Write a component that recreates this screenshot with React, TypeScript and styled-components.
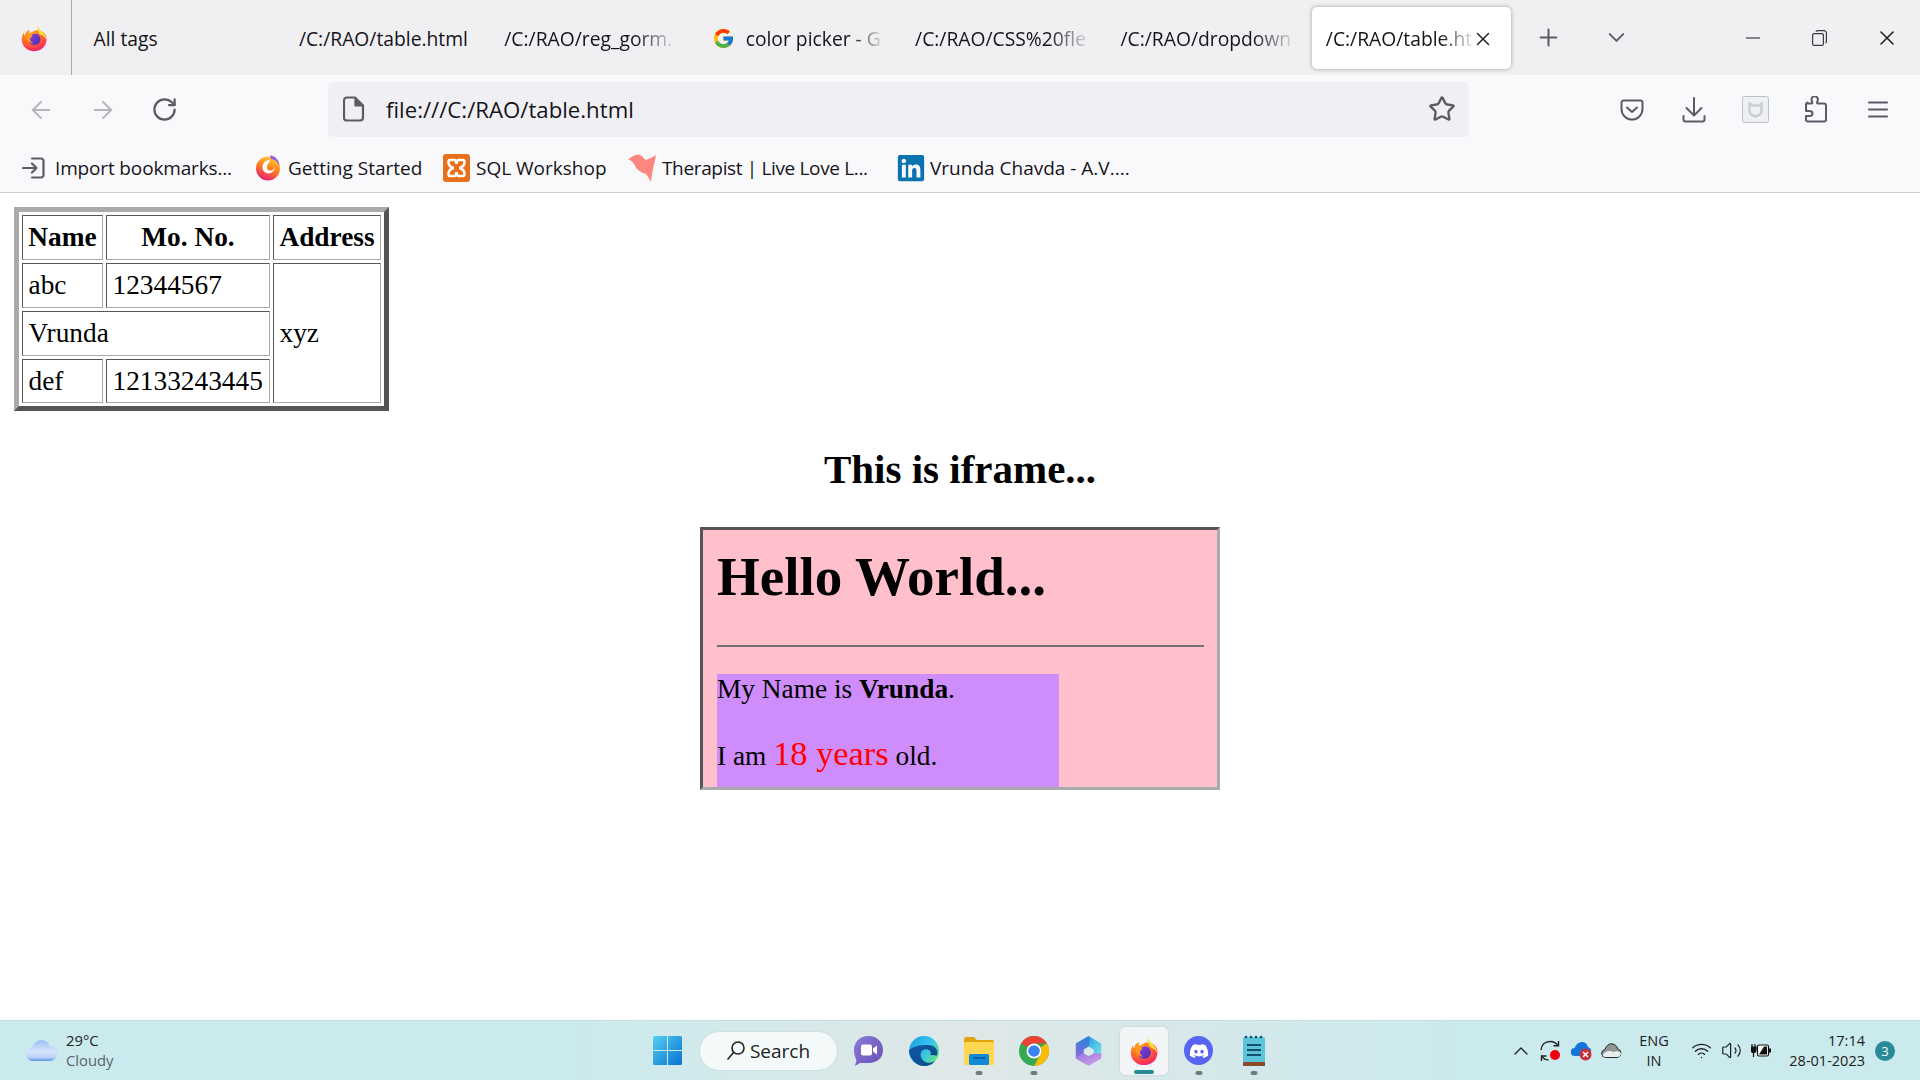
import React from "react";
import styled, { createGlobalStyle } from "styled-components";
import { ArrowLeft, ArrowRight, RotateCw, Star, X, Plus, ChevronDown, ChevronUp, Wifi, Volume2 } from "lucide-react";
import { FcGoogle } from "react-icons/fc";
import { FaDiscord, FaLinkedin } from "react-icons/fa";

const UI = `"Open Sans", "Noto Sans", sans-serif`;
const SERIF = `"Liberation Serif", serif`;
const ICON = "#5b5b66";

const Global = createGlobalStyle`
  html, body { margin: 0; padding: 0; height: 100%; background: #fff; overflow: hidden; }
  #root { height: 100%; }
`;

const Screen = styled.div`
  width: 1920px; height: 1080px; display: flex; flex-direction: column; overflow: hidden; font-family: ${UI}; color: #15141a;
`;
const TabBar = styled.div`
  height: 75px; flex: none; background: #f0f0f2; display: flex; align-items: stretch;
`;
const AppMenu = styled.div`
  width: 72px; margin-right: 7.5px; border-right: 1px solid #a8a8a8; display: flex; align-items: center; justify-content: center; padding-right: 3px; box-sizing: border-box; flex: none;
`;
const Tab = styled.div<{ $active?: boolean }>`
  width: 199px; margin: 7px 6.4px 6px 0; padding: 1px 16px 0 14px; box-sizing: border-box; flex: none;
  display: flex; align-items: center; gap: 7px; font-size: 19.3px; border-radius: 5px; white-space: nowrap;
  background: ${p => (p.$active ? "#fff" : "transparent")};
  box-shadow: ${p => (p.$active ? "0 0 4px rgba(0,0,0,.35)" : "none")};
`;
const TabLabel = styled.span<{ $fade?: boolean }>`
  display: block; flex: none; line-height: 30px;
  ${p => p.$fade ? "mask-image: linear-gradient(to right, #000 78%, rgba(0,0,0,.12) 100%);" : ""}
`;
const GoogleMark = styled(FcGoogle)`
  margin: 0 4px 0 2px; flex: none;
`;
const TabClose = styled(X)`
  margin-left: -7px; flex: none;
`;
const TabTools = styled.div`
  display: flex; align-items: center; gap: 5px; width: 131px; flex: none;
`;
const ToolSlot = styled.div`
  width: 63px; display: flex; justify-content: center; align-items: center; flex: none;
`;
const WindowControls = styled.div`
  display: flex; align-items: center; margin-left: auto;
`;
const WinBtn = styled.div`
  width: 67px; display: flex; justify-content: center; align-items: center;
`;

const NavBar = styled.div`
  height: 68px; flex: none; background: #f9f9fb; display: flex; align-items: center; padding-left: 10.5px;
`;
const NavSlot = styled.div`
  width: 61.5px; flex: none; display: flex; justify-content: center; align-items: center; padding-top: 1px;
`;
const Address = styled.div`
  width: 1141px; height: 55px; margin: 0 132.5px 0 133px; flex: none; box-sizing: border-box; border-radius: 5px; background: #f0f0f4;
  display: flex; align-items: center; padding: 0 13px 0 15px; gap: 21px; font-size: 22.2px;
`;
const Url = styled.span` flex: 1; padding-top: 1px; `;

const Bookmarks = styled.div`
  height: 50px; flex: none; background: #f9f9fb; border-bottom: 1px solid #cfcfd2; box-sizing: border-box; display: flex; align-items: center; padding: 1px 0 0 22px; font-size: 19px;
`;
const Bookmark = styled.div<{ $gap: number; $w: number; $ls?: number }>`
  display: flex; align-items: center; gap: ${p => p.$gap}px; width: ${p => p.$w}px; flex: none; white-space: nowrap;
  letter-spacing: ${p => p.$ls ?? 0}px;
`;

const Page = styled.main`
  flex: 1; background: #fff; color: #000; font-family: ${SERIF}; padding-top: 14px; min-height: 0;
`;
const InfoTable = styled.table`
  margin-left: 14px; border-collapse: separate; border-spacing: 3px; border-width: 5px; border-style: solid;
  border-color: #aaa #555 #555 #aaa; font-size: 27.33px; table-layout: fixed; width: 375px; box-sizing: border-box;
`;
const Col = styled.col<{ $w: number }>` width: ${p => p.$w}px; `;
const Head = styled.th`
  height: 45px; box-sizing: border-box; padding: 0 5px; border: 1px solid; border-color: #555 #aaa #aaa #555; text-align: center; font-weight: bold; white-space: nowrap;
`;
const Cell = styled.td<{ $h?: number }>`
  height: ${p => p.$h ?? 45}px; box-sizing: border-box; padding: 0 5.5px; border: 1px solid; border-color: #555 #aaa #aaa #555; white-space: nowrap;
`;
const FrameTitle = styled.h2`
  margin: 35px 0 34px; font-size: 41px; line-height: 47px; font-weight: bold; text-align: center;
`;
const Frame = styled.div`
  width: 520px; height: 263px; margin: 0 auto; box-sizing: border-box; overflow: hidden; background: #ffbfcb;
  border: 3px solid; border-color: #555 #aaa #aaa #555; padding: 16px 13px 0 14px;
`;
const Hello = styled.h1`
  margin: 0; font-size: 55px; line-height: 61px; font-weight: bold;
`;
const Rule = styled.hr`
  margin: 38px 0 27px; height: 2px; border: 0; background: #707070;
`;
const Purple = styled.div`
  width: 342px; height: 113px; background: #cf8cfb; font-size: 27.33px; line-height: 31px;
`;
const Line = styled.p<{ $top: number }>` margin: ${p => p.$top}px 0 0; `;
const Big = styled.span` color: #ff0000; font-size: 34.4px; `;

const Taskbar = styled.footer`
  height: 60px; flex: none; display: grid; grid-template-columns: 1fr auto 1fr; align-items: center; border-top: 1px solid #c4e0e2; box-sizing: border-box;
  background: linear-gradient(to right, #cbeaee 0%, #cbeaee 30%, #dfe8e7 50%, #d6e8ea 62%, #cbeaee 76%, #cbeaee 100%);
`;
const Weather = styled.div` display: flex; align-items: center; gap: 9px; padding-left: 26px; `;
const WeatherText = styled.div` display: flex; flex-direction: column; font-size: 14.8px; line-height: 20px; padding-bottom: 2px; `;
const Temp = styled.span` color: #222; `;
const Sky = styled.span` color: #5a6466; `;
const Center = styled.div` display: flex; align-items: center; `;
const Slot = styled.div<{ $active?: boolean; $wide?: boolean }>`
  width: ${p => p.$wide ? 56 : 55}px; height: 48px; flex: none; position: relative; display: flex; align-items: center; justify-content: center; box-sizing: border-box; border-radius: 5px;
  ${p => p.$active ? "background: #f1f5f5; box-shadow: 0 0 2px rgba(0,0,0,.15); width: 48px; margin: 0 3.5px;" : ""}
`;
const Dot = styled.span<{ $active?: boolean }>`
  position: absolute; bottom: ${p => p.$active ? "1px" : "0"}; left: 50%; transform: translateX(-50%); height: 4px; border-radius: 2px;
  width: ${p => p.$active ? "20px" : "7px"}; background: ${p => p.$active ? "#2a8a96" : "#707a7c"};
`;
const SearchPill = styled.div`
  width: 137px; height: 38px; margin: 0 4px 0 5px; flex: none; border-radius: 19px; background: #f4f9f9; box-shadow: 0 0 2px rgba(0,0,0,.12); box-sizing: border-box;
  display: flex; align-items: center; justify-content: center; gap: 5px; font-size: 19px; color: #222;
`;
const Tray = styled.div` display: flex; align-items: center; justify-content: flex-end; padding-right: 25px; `;
const TrayIcon = styled.div` width: 30px; display: flex; align-items: center; justify-content: center; flex: none; `;
const Lang = styled.div`
  width: 56px; margin-right: 4px; flex: none; text-align: center; font-size: 14.5px; line-height: 20px; color: #222;
`;
const Clock = styled.div`
  width: 89px; padding-right: 10px; text-align: right; font-size: 14.5px; line-height: 20px; color: #222; white-space: nowrap;
`;
const Badge = styled.div`
  width: 20px; height: 20px; border-radius: 50%; background: #2a8a96; color: #fff; font-size: 13px; display: flex; align-items: center; justify-content: center; flex: none;
`;
const DiscordDisc = styled.div`
  width: 29px; height: 29px; border-radius: 50%; background: #5865f2; display: flex; align-items: center; justify-content: center;
`;

const FirefoxLogo = ({ size, id }: { size: number; id: string }) => (
  <svg width={size} height={size} viewBox="0 0 32 32">
    <defs>
      <radialGradient id={id} cx="0.35" cy="0.2" r="0.95">
        <stop offset="0" stopColor="#ffb01f" />
        <stop offset="0.35" stopColor="#ff7a1f" />
        <stop offset="0.7" stopColor="#ff3b4e" />
        <stop offset="1" stopColor="#e31587" />
      </radialGradient>
      <linearGradient id={`${id}p`} x1="0" y1="0" x2="1" y2="1">
        <stop offset="0" stopColor="#8a3fe0" />
        <stop offset="1" stopColor="#4a2fb0" />
      </linearGradient>
    </defs>
    <path d="M20 7c4 0 8 3 9.500 6 1 2.500 1 5 .5 7-1 7-7 11-14 11C8 31 2 25 2 18c0-3 1-6 2-8 0 1 .5 2 1.500 3C6 9 9 7 11 7c-.5 1.500-.5 2.500 0 3.500C14 9 17 7 20 7z" fill={`url(#${id})`} />
    <path d="M20.500 1c0 4 3 6 5.500 8.500 2.500 2.500 4 5.500 4 9-1-3-3.500-5-6-6-3-1.500-5-6.500-3.500-11.500z" fill="#ffdc3a" />
    <circle cx="16.500" cy="17.500" r="6.800" fill={`url(#${id}p)`} />
    <path d="M9 13c2-3.500 8-4.500 11.500-1.500-3-1-6-.2-7.500 1.300 2 1 1 2.200-1 2.700-1 2.500.3 5.500 3.500 6.500-4.500 0-7.500-3-7.500-6 0-1.300.4-2 1-3z" fill="#ff9a22" />
  </svg>
);

const StartedLogo = () => (
  <svg width="26" height="28" viewBox="0 0 26 28">
    <defs>
      <linearGradient id="gs" x1="0.7" y1="0" x2="0.3" y2="1">
        <stop offset="0" stopColor="#ffd23a" />
        <stop offset="0.5" stopColor="#ff7a1f" />
        <stop offset="1" stopColor="#e5197e" />
      </linearGradient>
    </defs>
    <circle cx="13" cy="14.500" r="12" fill="url(#gs)" />
    <path d="M15 1.500c5.500.5 9.500 5 9.500 11-1-4.500-4.500-7-8.500-7.500z" fill="#8a5ae8" />
    <path d="M15 6c-5 0-8 4-7.500 8 .5 4 4 6 8 5 3-1 4.500-3 4-6-.5 3-3 4-5 3.500C12 16 11 13 13 10c1-2 2-3 2-4z" fill="#fff" />
  </svg>
);

const WinLogo = () => (
  <svg width="29" height="29" viewBox="0 0 29 29">
    <defs>
      <linearGradient id="wl" x1="0" y1="0" x2="1" y2="1">
        <stop offset="0" stopColor="#55cff5" />
        <stop offset="1" stopColor="#0672cf" />
      </linearGradient>
    </defs>
    <path d="M0 1.500A1.500 1.500 0 0 1 1.500 0H14v14H0zM15 0h12.500A1.500 1.500 0 0 1 29 1.500V14H15zM0 15h14v14H1.500A1.500 1.500 0 0 1 0 27.500zM15 15h14v12.500a1.500 1.500 0 0 1-1.500 1.500H15z" fill="url(#wl)" />
  </svg>
);

const MeetIcon = () => (
  <svg width="29" height="30" viewBox="0 0 29 30">
    <defs>
      <linearGradient id="mt" x1="0" y1="0" x2="1" y2="1">
        <stop offset="0" stopColor="#8a7bd8" />
        <stop offset="1" stopColor="#6a4fb8" />
      </linearGradient>
    </defs>
    <path d="M14.500 0C23 0 29 6 29 14s-6 13-14.500 13H6L1 30l1.500-6C1 21 0 18 0 14 0 6 6 0 14.500 0z" fill="url(#mt)" />
    <rect x="7" y="8.500" width="11" height="11" rx="2" fill="#fff" />
    <path d="M19 12.500l4-3v9l-4-3z" fill="#fff" />
  </svg>
);

const EdgeIcon = () => (
  <svg width="30" height="30" viewBox="0 0 30 30">
    <defs>
      <linearGradient id="eg1" x1="0" y1="0" x2="1" y2="1">
        <stop offset="0" stopColor="#0c59a4" />
        <stop offset="1" stopColor="#114a8b" />
      </linearGradient>
      <linearGradient id="eg2" x1="0" y1="0" x2="1" y2="0.6">
        <stop offset="0" stopColor="#1b9de2" />
        <stop offset="0.6" stopColor="#35c1f1" />
        <stop offset="1" stopColor="#5fe28a" />
      </linearGradient>
    </defs>
    <circle cx="15" cy="15" r="15" fill="url(#eg2)" />
    <path d="M0 15C1 23 7 30 15 30c5 0 9-2 11-5-5 3-11 2-13-2-2-3-2-7 1-9 2-1.500 6-1 7 1 1 1.500 1 3 0 4l7 .5C30 14 26 9 19 9 10 9 3 10 0 15z" fill="url(#eg1)" />
  </svg>
);

const FolderIcon = () => (
  <svg width="30" height="28" viewBox="0 0 30 28">
    <path d="M0 2a2 2 0 0 1 2-2h8l3 3h15a2 2 0 0 1 2 2v4H0z" fill="#e0a40e" />
    <rect x="0" y="5" width="30" height="23" rx="1.500" fill="#ffd64f" />
    <rect x="5" y="17" width="20" height="11" rx="1.500" fill="#0f8ad8" />
    <rect x="9" y="20" width="12" height="2" fill="#0a5ea8" />
  </svg>
);

const ChromeIcon = () => (
  <svg width="30" height="30" viewBox="0 0 30 30">
    <circle cx="15" cy="15" r="15" fill="#34a853" />
    <path d="M15 0a15 15 0 0 1 13 7.500H15a7.500 7.500 0 0 0-6.500 3.750L2 7.500A15 15 0 0 1 15 0z" fill="#ea4335" />
    <path d="M28 7.500A15 15 0 0 1 15 30l6.500-11.250A7.500 7.500 0 0 0 21.500 11.250z" fill="#fbbc04" />
    <circle cx="15" cy="15" r="7.500" fill="#fff" />
    <circle cx="15" cy="15" r="5.800" fill="#3b82f0" />
  </svg>
);

const M365Icon = () => (
  <svg width="27" height="30" viewBox="0 0 27 30" strokeWidth="1.500" strokeLinejoin="round">
    <defs>
      <linearGradient id="m1" x1="0.5" y1="0" x2="0.2" y2="1">
        <stop offset="0" stopColor="#2f7fdc" />
        <stop offset="1" stopColor="#8a6ed8" />
      </linearGradient>
      <linearGradient id="m2" x1="0" y1="0" x2="1" y2="1">
        <stop offset="0" stopColor="#2f9fe0" />
        <stop offset="1" stopColor="#72e0ee" />
      </linearGradient>
      <linearGradient id="m3" x1="0" y1="0" x2="1" y2="1">
        <stop offset="0" stopColor="#9a78dc" />
        <stop offset="1" stopColor="#d4a4ee" />
      </linearGradient>
    </defs>
    <path d="M13.500 1L25.500 8V19L19.500 18V13L13.500 9.500z" fill="url(#m2)" stroke="url(#m2)" />
    <path d="M13.500 1L1.500 8V22L8 18V13L13.500 9.500z" fill="url(#m1)" stroke="url(#m1)" />
    <path d="M1.500 22L8 18L13.500 21L19.500 18H25.500V22L13.500 29z" fill="url(#m3)" stroke="url(#m3)" />
  </svg>
);

const NotepadIcon = () => (
  <svg width="22" height="31" viewBox="0 0 22 31">
    <rect x="0" y="2" width="22" height="27" rx="1.500" fill="#5cc3d8" />
    <rect x="0" y="27" width="22" height="4" fill="#8a4a2a" />
    <g fill="#14506a">
      <circle cx="3" cy="2" r="1.300" /><circle cx="8" cy="2" r="1.300" /><circle cx="13" cy="2" r="1.300" /><circle cx="18" cy="2" r="1.300" />
      <rect x="4" y="9" width="14" height="2" /><rect x="4" y="14" width="14" height="2" /><rect x="4" y="19" width="14" height="2" />
    </g>
  </svg>
);

const PageIcon = () => (
  <svg width="22" height="26" viewBox="0 0 22 26" fill="none" stroke={ICON} strokeWidth="2.200" strokeLinejoin="round">
    <path d="M4 1.500h8l8 8V21.500a3 3 0 0 1-3 3H4a3 3 0 0 1-3-3V4.500a3 3 0 0 1 3-3z" />
    <path d="M12.500 2v7.500H20" fill={ICON} />
  </svg>
);

const ImportIcon = () => (
  <svg width="24" height="24" viewBox="0 0 24 24" fill="none" stroke={ICON} strokeWidth="2.200" strokeLinecap="round" strokeLinejoin="round">
    <path d="M10 2.500h9a2.500 2.500 0 0 1 2.500 2.500v14a2.500 2.500 0 0 1-2.500 2.500h-9" />
    <path d="M1 12h13M10 7.500l4.500 4.500L10 16.500" />
  </svg>
);

const XamppIcon = () => (
  <svg width="27" height="28" viewBox="0 0 27 28">
    <rect width="27" height="28" rx="3" fill="#e8701a" />
    <path d="M7 6h4c2 0 2.500 2 2.500 4 0-2 .5-4 2.500-4h4c2 0 2 4 0 6-1 1-3 2-4 2 1 0 3 1 4 2 2 2 2 6 0 6h-4c-2 0-2.500-2-2.500-4 0 2-.5 4-2.500 4H7c-2 0-2-4 0-6 1-1 3-2 4-2-1 0-3-1-4-2-2-2-2-6 0-6z" fill="none" stroke="#fff" strokeWidth="2.600" />
  </svg>
);

const BirdIcon = () => (
  <svg width="28" height="28" viewBox="0 0 28 28">
    <path d="M0 5.500C3 3 7 .5 10 .5c3 0 5 2.500 7.500 5.500C21 5 25 3 28 1c-1 5-2 10-3 14-1 4-1.500 9-2 13-2-3-3-6-5-8-4-1-9-4-11-8C6 9 3 6 0 5.500z" fill="#fc8780" />
  </svg>
);

const PocketIcon = () => (
  <svg width="24" height="22" viewBox="0 0 24 22" fill="none" stroke={ICON} strokeWidth="2" strokeLinecap="round" strokeLinejoin="round">
    <path d="M3.500 1.500h17a2 2 0 0 1 2 2V10a10.500 10.500 0 0 1-21 0V3.500a2 2 0 0 1 2-2z" />
    <path d="M7 8.500l5 4.500 5-4.500" />
  </svg>
);

const DownloadIcon = () => (
  <svg width="24" height="26" viewBox="0 0 24 26" fill="none" stroke={ICON} strokeWidth="2" strokeLinecap="round" strokeLinejoin="round">
    <path d="M12 1v17M4.500 11l7.500 7.500 7.500-7.500" />
    <path d="M1.500 19v3.500a2 2 0 0 0 2 2h17a2 2 0 0 0 2-2V19" />
  </svg>
);

const ShieldExt = () => (
  <svg width="27" height="27" viewBox="0 0 27 27">
    <rect x=".5" y=".5" width="26" height="26" rx="2" fill="#eff0f1" stroke="#b8c0c8" />
    <path d="M7.500 7.500l3 2h6l3-2v8c0 2-3 4-6 5-3-1-6-3-6-5z" fill="none" stroke="#c8d0d2" strokeWidth="2.500" />
  </svg>
);

const PuzzleIcon = () => (
  <svg width="23" height="27" viewBox="0 0 23 27" fill="none" stroke={ICON} strokeWidth="2" strokeLinejoin="round">
    <path d="M2.500 7.500h4c.8 0 1-.6.8-1.200-.5-1-.8-1.800-.8-2.800a3.200 3.200 0 0 1 6.400 0c0 1-.3 1.800-.8 2.800-.2.6 0 1.200.8 1.200h6.600a2 2 0 0 1 1.500 2v14a2 2 0 0 1-2 2H3a2 2 0 0 1-2-2v-3.500h3.500c1.500 0 3-1 3-2.500s-1.500-2.500-3-2.500H1v-6.500a2 2 0 0 1 1.500-2z" />
  </svg>
);

const MenuIcon = () => (
  <svg width="20" height="17" viewBox="0 0 20 17" fill="none" stroke={ICON} strokeWidth="2" strokeLinecap="round">
    <path d="M1 1.500h18M1 8.500h18M1 15.500h18" />
  </svg>
);

const RestoreIcon = () => (
  <svg width="15" height="16" viewBox="0 0 15 16" fill="none" stroke="#3a3a40" strokeWidth="1.200">
    <rect x=".6" y="3.600" width="10.800" height="11.800" rx="1.500" />
    <path d="M4 1.800c.3-.8.8-1.200 1.500-1.200h6.500a2.400 2.400 0 0 1 2.400 2.400v8.500c0 .7-.4 1.200-1 1.500" />
  </svg>
);

const WeatherCloud = () => (
  <svg width="31" height="21" viewBox="0 0 31 21">
    <defs>
      <linearGradient id="wc" x1="0" y1="0" x2="0" y2="1">
        <stop offset="0" stopColor="#9cbff4" />
        <stop offset="0.55" stopColor="#d6e3fa" />
        <stop offset="0.82" stopColor="#bcd2f6" />
        <stop offset="1" stopColor="#5f94ea" />
      </linearGradient>
    </defs>
    <path d="M7 21a6.500 6.500 0 0 1-1-13C7 3 11 0 15.500 0c4 0 7 2.500 8.500 6a7.500 7.500 0 0 1 0 15z" fill="url(#wc)" />
  </svg>
);

const SearchGlass = () => (
  <svg width="18" height="19" viewBox="0 0 18 19" fill="none" stroke="#222" strokeWidth="1.600" strokeLinecap="round">
    <circle cx="11" cy="7" r="6" />
    <path d="M6.500 11.500L1 18" />
  </svg>
);

const SyncIcon = () => (
  <svg width="22" height="22" viewBox="0 0 22 22">
    <g fill="none" stroke="#222" strokeWidth="1.400">
      <path d="M1 10C1.500 5 5 1.500 10 1.500c4 0 6.500 1.500 8 4.500" />
      <path d="M13.500 5.800h5V1" />
      <path d="M1.500 15.500c1.500 3 4 4.500 7 4.500" />
      <path d="M1.500 21v-5h5" />
    </g>
    <circle cx="15" cy="15" r="5" fill="#f0000f" />
  </svg>
);

const OneDriveError = () => (
  <svg width="21" height="20" viewBox="0 0 21 20">
    <path d="M4 15a4 4 0 0 1-.5-8C5 3 8 1 11 1c3 0 5.500 2 6 5a4 4 0 0 1 1 7.500V15z" fill="#1476d8" />
    <circle cx="14.500" cy="13.500" r="6" fill="#c8303a" />
    <path d="M12 11l5 5M17 11l-5 5" stroke="#fff" strokeWidth="1.500" />
  </svg>
);

const GreyCloud = () => (
  <svg width="21" height="15" viewBox="0 0 21 15">
    <path d="M4.500 14.500a4 4 0 0 1-.7-7.900C5 3 7.500.8 10.500.8s5.500 2 6.200 5a4.500 4.500 0 0 1-.2 8.700z" fill="#8e9696" stroke="#2a2a2a" strokeWidth="1" />
    <path d="M1.500 12c3-4 7-5 10.500-3 3-1 6-1 8 1 0 3-2 4-3.500 4h-12C3 14 2 13 1.500 12z" fill="#e8eeee" stroke="none" />
  </svg>
);

const BatteryIcon = () => (
  <svg width="20" height="15" viewBox="0 0 20 15">
    <path d="M1 1v3M4 1v3M0 4h5v3a2.500 2.500 0 0 1-5 0zM2.500 9.500V14" stroke="#111" strokeWidth="1.200" fill="#111" />
    <rect x="6.500" y="2" width="11" height="11" rx="1.500" fill="#fff" stroke="#111" strokeWidth="1.200" />
    <path d="M8 11.500l5-8h3v8z" fill="#111" />
    <rect x="18" y="5.500" width="2" height="4" fill="#111" />
  </svg>
);

const tabs = [
  { label: "All tags" },
  { label: "/C:/RAO/table.html" },
  { label: "/C:/RAO/reg_gorm.", fade: true },
  { label: "color picker - G", fade: true, google: true },
  { label: "/C:/RAO/CSS%20fle", fade: true },
  { label: "/C:/RAO/dropdown", fade: true },
];

const slots = [
  { key: "meet", icon: <MeetIcon /> },
  { key: "edge", icon: <EdgeIcon /> },
  { key: "folder", icon: <FolderIcon />, dot: true },
  { key: "chrome", icon: <ChromeIcon />, dot: true },
  { key: "m365", icon: <M365Icon /> },
  { key: "firefox", icon: <FirefoxLogo size={30} id="ffb" />, active: true },
  { key: "discord", icon: <DiscordDisc><FaDiscord size={20} color="#fff" /></DiscordDisc>, dot: true },
  { key: "notes", icon: <NotepadIcon />, dot: true },
];

export default function App() {
  return (
    <Screen>
      <Global />
      <TabBar>
        <AppMenu><FirefoxLogo size={28} id="ffa" /></AppMenu>
        {tabs.map(t => (
          <Tab key={t.label}>
            {t.google && <GoogleMark size={23} />}
            <TabLabel $fade={t.fade}>{t.label}</TabLabel>
          </Tab>
        ))}
        <Tab $active>
          <TabLabel $fade>/C:/RAO/table.ht</TabLabel>
          <TabClose size={22} color="#222" strokeWidth={1.6} />
        </Tab>
        <TabTools>
          <ToolSlot><Plus size={27} color={ICON} strokeWidth={1.8} /></ToolSlot>
          <ToolSlot><ChevronDown size={27} color={ICON} strokeWidth={1.8} /></ToolSlot>
        </TabTools>
        <WindowControls>
          <WinBtn><svg width="14" height="2" viewBox="0 0 14 2"><path d="M0 1h14" stroke="#3a3a40" strokeWidth="1.200" /></svg></WinBtn>
          <WinBtn><RestoreIcon /></WinBtn>
          <WinBtn><X size={24} color="#222" strokeWidth={1.6} /></WinBtn>
        </WindowControls>
      </TabBar>

      <NavBar>
        <NavSlot><ArrowLeft size={28} color="#b5b5ba" strokeWidth={1.7} /></NavSlot>
        <NavSlot><ArrowRight size={28} color="#b5b5ba" strokeWidth={1.7} /></NavSlot>
        <NavSlot><RotateCw size={27} color={ICON} strokeWidth={2} /></NavSlot>
        <Address>
          <PageIcon />
          <Url>file:///C:/RAO/table.html</Url>
          <Star size={28} color={ICON} strokeWidth={2} />
        </Address>
        <NavSlot><PocketIcon /></NavSlot>
        <NavSlot><DownloadIcon /></NavSlot>
        <NavSlot><ShieldExt /></NavSlot>
        <NavSlot><PuzzleIcon /></NavSlot>
        <NavSlot><MenuIcon /></NavSlot>
      </NavBar>

      <Bookmarks>
        <Bookmark $gap={9} $w={233} $ls={-0.15}><ImportIcon />Import bookmarks...</Bookmark>
        <Bookmark $gap={7} $w={188}><StartedLogo />Getting Started</Bookmark>
        <Bookmark $gap={6} $w={185}><XamppIcon />SQL Workshop</Bookmark>
        <Bookmark $gap={6} $w={268} $ls={-0.35}><BirdIcon />Therapist | Live Love L...</Bookmark>
        <Bookmark $gap={4} $w={240}><FaLinkedin size={30} color="#0a72b1" />Vrunda Chavda - A.V....</Bookmark>
      </Bookmarks>

      <Page>
        <InfoTable>
          <colgroup><Col $w={81} /><Col $w={164} /><Col $w={108} /></colgroup>
          <tbody>
            <tr><Head>Name</Head><Head>Mo. No.</Head><Head>Address</Head></tr>
            <tr><Cell>abc</Cell><Cell>12344567</Cell><Cell rowSpan={3}>xyz</Cell></tr>
            <tr><Cell colSpan={2}>Vrunda</Cell></tr>
            <tr><Cell $h={44}>def</Cell><Cell $h={44}>12133243445</Cell></tr>
          </tbody>
        </InfoTable>
        <FrameTitle>This is iframe...</FrameTitle>
        <Frame>
          <Hello>Hello World...</Hello>
          <Rule />
          <Purple>
            <Line $top={4}>My Name is <b>Vrunda</b>.</Line>
            <Line $top={33}>I am <Big>18 years</Big> old.</Line>
          </Purple>
        </Frame>
      </Page>

      <Taskbar>
        <Weather>
          <WeatherCloud />
          <WeatherText><Temp>29°C</Temp><Sky>Cloudy</Sky></WeatherText>
        </Weather>
        <Center>
          <Slot $wide><WinLogo /></Slot>
          <SearchPill><SearchGlass />Search</SearchPill>
          {slots.map(s => (
            <Slot key={s.key} $active={s.active}>
              {s.icon}
              {(s.dot || s.active) && <Dot $active={s.active} />}
            </Slot>
          ))}
        </Center>
        <Tray>
          <TrayIcon><ChevronUp size={24} color="#222" strokeWidth={1.3} /></TrayIcon>
          <TrayIcon><SyncIcon /></TrayIcon>
          <TrayIcon><OneDriveError /></TrayIcon>
          <TrayIcon><GreyCloud /></TrayIcon>
          <Lang>ENG<br />IN</Lang>
          <TrayIcon><Wifi size={21} color="#222" strokeWidth={1.6} /></TrayIcon>
          <TrayIcon><Volume2 size={21} color="#222" strokeWidth={1.4} /></TrayIcon>
          <TrayIcon><BatteryIcon /></TrayIcon>
          <Clock>17:14<br />28-01-2023</Clock>
          <Badge>3</Badge>
        </Tray>
      </Taskbar>
    </Screen>
  );
}
